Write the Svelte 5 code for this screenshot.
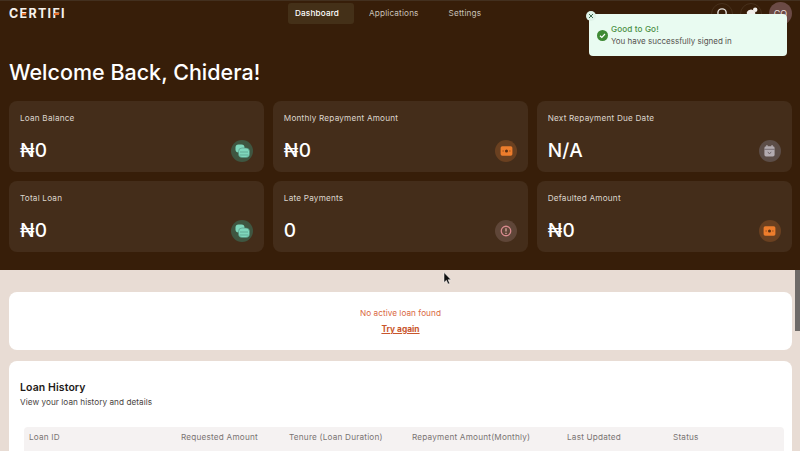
<script>
  const navItems = ["Dashboard", "Applications", "Settings"];

  const stats = [
    { label: "Loan Balance", value: "₦0", tone: "green", icon: "coins" },
    { label: "Monthly Repayment Amount", value: "₦0", tone: "orange", icon: "cash" },
    { label: "Next Repayment Due Date", value: "N/A", tone: "grey", icon: "calendar" },
    { label: "Total Loan", value: "₦0", tone: "green", icon: "coins" },
    { label: "Late Payments", value: "0", tone: "red", icon: "alert" },
    { label: "Defaulted Amount", value: "₦0", tone: "orange", icon: "cash" }
  ];

  const columns = [
    "Loan ID",
    "Requested Amount",
    "Tenure (Loan Duration)",
    "Repayment Amount(Monthly)",
    "Last Updated",
    "Status"
  ];
</script>

<div class="page">
  <section class="hero">
    <header class="topbar">
      <div class="logo">C<span class="mark">E</span>RTI<span class="mark">F</span>I</div>
      <nav class="nav">
        {#each navItems as item, i}
          <span class="nav-item" class:active={i === 0}>{item}</span>
        {/each}
      </nav>
      <div class="actions">
        <span class="ring">
          <svg width="13" height="13" viewBox="0 0 14 14" fill="none" stroke="#e8e4e0" stroke-width="1.5">
            <circle cx="6.5" cy="6.5" r="4.5" />
            <path d="M10 10l3 3" />
          </svg>
        </span>
        <span class="ring">
          <svg width="13" height="13" viewBox="0 0 14 14" fill="#f1eeea">
            <path d="M2 5.5a5 5 0 0 1 9 0v5H2z" />
            <circle cx="11" cy="3" r="2.4" />
          </svg>
        </span>
        <span class="avatar">CO</span>
      </div>
    </header>

    <h1 class="welcome">Welcome Back, Chidera!</h1>

    <div class="stats">
      {#each stats as stat}
        <div class="stat">
          <div class="stat-label">{stat.label}</div>
          <div class="stat-row">
            <span class="stat-value">{stat.value}</span>
            <span class="badge {stat.tone}">
              {#if stat.icon === "coins"}
                <svg class="coins" width="15" height="14" viewBox="0 0 15 14">
                  <rect x="0.5" y="0.5" width="9" height="8" rx="3" fill="#7fd8bd" />
                  <rect x="3.5" y="4" width="11" height="9.5" rx="3.5" fill="#7fd8bd" stroke="#4f8f7c" stroke-width="0.6" />
                  <path d="M5 8h8M5 11h8" stroke="#4f8f7c" stroke-width="0.6" />
                </svg>
              {:else if stat.icon === "cash"}
                <svg width="15" height="12" viewBox="0 0 15 12">
                  <rect x="0.5" y="0.5" width="14" height="11" rx="2" fill="#ee7d2c" />
                  <circle cx="7.5" cy="6" r="1.8" fill="#5a2f12" />
                  <path d="M3 6h1M11 6h1" stroke="#5a2f12" stroke-width="1.2" />
                </svg>
              {:else if stat.icon === "calendar"}
                <svg width="13" height="14" viewBox="0 0 13 14">
                  <rect x="0.5" y="1.5" width="12" height="12" rx="2" fill="#b3abb0" />
                  <path d="M3.5 0v3M9.5 0v3" stroke="#b3abb0" stroke-width="1.4" />
                  <path d="M0.5 5h12" stroke="#5d5257" stroke-width="0.8" />
                  <path d="M4.5 8l2 2.5 2-2.5" stroke="#5d5257" stroke-width="0.9" fill="none" />
                </svg>
              {:else}
                <svg width="14" height="14" viewBox="0 0 14 14" fill="none">
                  <circle cx="7" cy="7" r="5.6" stroke="#d88a8e" stroke-width="1.5" />
                  <path d="M7 3.8v3.8M7 9.2v1.2" stroke="#e8b0a8" stroke-width="1.4" />
                </svg>
              {/if}
            </span>
          </div>
        </div>
      {/each}
    </div>
  </section>

  <main class="content">
    <section class="card notice">
      <p class="notice-text">No active loan found</p>
      <span class="retry">Try again</span>
    </section>

    <section class="card history">
      <h2>Loan History</h2>
      <p class="history-sub">View your loan history and details</p>
      <div class="table-head">
        {#each columns as col}
          <span>{col}</span>
        {/each}
      </div>
    </section>
  </main>

  <div class="toast">
    <span class="toast-close">
      <svg width="6" height="6" viewBox="0 0 6 6" stroke="#3f6b50" stroke-width="1">
        <path d="M1 1l4 4M5 1l-4 4" />
      </svg>
    </span>
    <svg class="toast-check" width="11" height="11" viewBox="0 0 11 11">
      <circle cx="5.5" cy="5.5" r="5.5" fill="#3f8a35" />
      <path d="M3 5.7l1.8 1.7L8 4" stroke="#fff" stroke-width="1.2" fill="none" />
    </svg>
    <div>
      <div class="toast-title">Good to Go!</div>
      <div class="toast-body">You have successfully signed in</div>
    </div>
  </div>

  <div class="scroll-thumb"></div>

  <svg class="cursor" width="9" height="13" viewBox="0 0 9 13">
    <path d="M1 0.5v10l2.4-2.2 1.6 3.8 1.7-.7-1.6-3.7H8z" fill="#111" stroke="#fff" stroke-width="0.5" />
  </svg>
</div>

<style>
  :global(body) {
    margin: 0;
    background: #e8dcd4;
  }

  .page {
    position: relative;
    width: 800px;
    height: 451px;
    overflow: hidden;
    font-family: Inter, "Open Sans", sans-serif;
    background: #e8dcd4;
  }

  .hero {
    height: 270px;
    box-sizing: border-box;
    padding: 2px 8px 0 9px;
    border-top: 1px solid #43301f;
    background: #371e09;
    color: #fff;
  }

  .topbar {
    display: flex;
    align-items: center;
    height: 21px;
  }

  .logo {
    flex: 0 0 279px;
    font-size: 12.5px;
    font-weight: 700;
    letter-spacing: 1.3px;
    color: #f6f1ec;
  }

  .mark {
    position: relative;
  }

  .mark::after {
    content: "";
    position: absolute;
    left: 2px;
    right: 2.5px;
    top: 7px;
    height: 2px;
    background: #e8702a;
  }

  .nav {
    display: flex;
    font-size: 8.2px;
    color: #c9c1b8;
  }

  .nav-item {
    padding: 0 7px;
    line-height: 21px;
    letter-spacing: 0.15px;
    margin-right: 16px;
    border-radius: 3px;
  }

  .nav-item.active {
    padding-right: 15px;
    margin-right: 8px;
    background: #443018;
    color: #fff;
    font-weight: 500;
  }

  .actions {
    margin-left: auto;
    display: flex;
    align-items: center;
    gap: 7px;
  }

  .ring {
    width: 22px;
    height: 22px;
    display: flex;
    align-items: center;
    justify-content: center;
    border-radius: 50%;
    border: 1px solid #47301c;
    box-sizing: border-box;
  }

  .avatar {
    width: 23px;
    height: 23px;
    border-radius: 50%;
    background: #6b4a45;
    color: #e9dfdc;
    font-size: 9px;
    display: flex;
    align-items: center;
    justify-content: center;
  }

  .welcome {
    margin: 33px 0 14px;
    font-size: 21.5px;
    line-height: 30px;
    font-weight: 500;
    color: #fff;
  }

  .stats {
    display: grid;
    grid-template-columns: repeat(3, 1fr);
    gap: 9px 8.5px;
  }

  .stat {
    height: 71px;
    box-sizing: border-box;
    padding: 11px 11px 0;
    background: #442d1a;
    border-radius: 8px;
  }

  .stat-label {
    font-size: 8.2px;
    line-height: 12px;
    letter-spacing: 0.2px;
    color: #dcd5cd;
  }

  .stat-row {
    display: flex;
    align-items: center;
    justify-content: space-between;
    margin-top: 15px;
  }

  .stat-value {
    font-size: 19px;
    line-height: 24px;
    font-weight: 500;
    letter-spacing: 0.3px;
    color: #fff;
  }

  .badge {
    width: 22px;
    height: 22px;
    border-radius: 50%;
    display: flex;
    align-items: center;
    justify-content: center;
    flex: none;
  }

  .badge.green { background: #3f5641; }
  .badge.orange { background: #6a4020; }
  .badge.grey { background: #5c4d47; }
  .badge.red { background: #5f4638; }

  .badge svg {
    transform: scale(0.85);
  }

  .badge svg.coins {
    transform: none;
  }

  .content {
    padding: 22px 8px 0 9px;
  }

  .card {
    background: #fff;
    border-radius: 8px;
  }

  .notice {
    height: 58px;
    margin-bottom: 11px;
    padding-top: 15px;
    box-sizing: border-box;
    text-align: center;
    font-size: 8.2px;
    color: #d9683f;
  }

  .notice-text {
    margin: 0 0 4px;
    line-height: 12px;
    letter-spacing: 0.05px;
  }

  .retry {
    display: block;
    font-size: 8.4px;
    line-height: 12px;
    font-weight: 700;
    color: #c9562c;
    text-decoration: underline;
  }

  .history {
    height: 120px;
    padding: 20px 8px 0 11px;
    box-sizing: border-box;
  }

  .history h2 {
    margin: 0;
    font-size: 10.5px;
    line-height: 13px;
    font-weight: 600;
    letter-spacing: 0.1px;
    color: #1e1a18;
  }

  .history-sub {
    margin: 2px 0 18px;
    font-size: 8.2px;
    line-height: 13px;
    letter-spacing: 0.05px;
    color: #4a4442;
  }

  .table-head {
    display: grid;
    grid-template-columns: 152px 108px 123px 155px 106px 1fr;
    margin-left: 4px;
    padding: 4px 0 0 5px;
    height: 24px;
    box-sizing: border-box;
    line-height: 12px;
    background: #f5f2f2;
    border-radius: 4px 4px 0 0;
    font-size: 8.2px;
    letter-spacing: 0.2px;
    color: #7a7472;
  }

  .toast {
    position: absolute;
    left: 589px;
    top: 14px;
    width: 198px;
    height: 42px;
    box-sizing: border-box;
    padding-left: 8px;
    display: flex;
    align-items: center;
    gap: 3px;
    background: #e9fbf1;
    border-radius: 4px;
  }

  .toast-close {
    position: absolute;
    left: -3px;
    top: -3px;
    width: 10px;
    height: 10px;
    border-radius: 50%;
    background: #dff3e8;
    display: flex;
    align-items: center;
    justify-content: center;
  }

  .toast-check {
    flex: none;
  }

  .toast-title {
    font-size: 8.2px;
    line-height: 12px;
    letter-spacing: 0.1px;
    color: #4b9146;
    font-weight: 500;
  }

  .toast-body {
    font-size: 8px;
    line-height: 12px;
    color: #55524f;
  }

  .scroll-thumb {
    position: absolute;
    right: 0;
    top: 270px;
    width: 5px;
    height: 61px;
    background: #6e6a68;
  }

  .cursor {
    position: absolute;
    left: 443px;
    top: 272px;
  }
</style>
